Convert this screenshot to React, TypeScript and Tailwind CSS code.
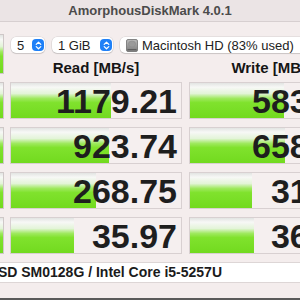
import type { ReactNode } from 'react'

const FONT = { fontFamily: '"Liberation Sans", Arial, sans-serif' }

const GREEN =
  'bg-[linear-gradient(to_bottom,#e2e4e2_0%,#f7f8f6_12%,#e3f4d8_30%,#9fe95f_44%,#80e22d_56%,#72da1f_100%)]'

interface Result {
  read: string
  write: string
  readBar: number
  writeBar: number
}

const RESULTS: Result[] = [
  { read: '1179.21', write: '583.41', readBar: 100, writeBar: 94 },
  { read: '923.74', write: '658.27', readBar: 98, writeBar: 95 },
  { read: '268.75', write: '31.95', readBar: 85, writeBar: 62 },
  { read: '35.97', write: '36.62', readBar: 63, writeBar: 64 },
]

function Stepper() {
  return (
    <span className="flex h-[12px] w-[12px] shrink-0 items-center justify-center rounded-[4px] bg-[#1f80f7]">
      <svg width="7" height="9" viewBox="0 0 7 9" fill="none">
        <path d="M1.2 3.4 3.5 1.2 5.8 3.4" stroke="white" strokeWidth="1.2" strokeLinecap="round" strokeLinejoin="round" />
        <path d="M1.2 5.6 3.5 7.8 5.8 5.6" stroke="white" strokeWidth="1.2" strokeLinecap="round" strokeLinejoin="round" />
      </svg>
    </span>
  )
}

function Select({ width, children }: { width: string; children: ReactNode }) {
  return (
    <div
      className={`flex h-[16px] shrink-0 items-center justify-between rounded-[5px] bg-white pr-[1px] pl-[6px] text-[13px] leading-none text-[#222] shadow-[0_0_0_0.5px_rgba(0,0,0,0.12),0_1px_1px_rgba(0,0,0,0.12)] ${width}`}
    >
      <span className="flex items-center gap-[4px]">{children}</span>
      <Stepper />
    </div>
  )
}

function DiskIcon() {
  return (
    <svg width="12" height="13" viewBox="0 0 12 13">
      <defs>
        <linearGradient id="hd" x1="0" y1="0" x2="0" y2="1">
          <stop offset="0" stopColor="#b9b9b9" />
          <stop offset="1" stopColor="#7d7d7d" />
        </linearGradient>
      </defs>
      <rect x="0.5" y="0.5" width="11" height="12" rx="1.5" fill="url(#hd)" stroke="#6f6f6f" strokeWidth="0.8" />
      <ellipse cx="6" cy="5" rx="3.6" ry="3" fill="#9a9a9a" stroke="#8a8a8a" strokeWidth="0.5" />
      <rect x="1.5" y="10" width="9" height="1.2" fill="#5e5e5e" />
    </svg>
  )
}

function Cell({ value, bar }: { value: string; bar: number }) {
  return (
    <div className="relative flex h-[37px] w-[172px] shrink-0 items-center justify-end overflow-hidden border border-[#d8d0d1] bg-[#f5efef] pr-[4px]">
      <div className={`absolute top-0 bottom-0 left-0 ${GREEN}`} style={{ width: `${bar}px` }} />
      <span className="relative text-[34px] leading-none font-bold text-[#1e1e1e]">{value}</span>
    </div>
  )
}

export default function App() {
  return (
    <div className="h-[300px] w-[300px] overflow-hidden bg-[#f4eded]" style={FONT}>
      <div className="flex h-[22px] items-center justify-center border-b border-[#d7cfd0] bg-[#ebe4e5] text-[13px] font-bold text-[#4b4b4b]">
        AmorphousDiskMark 4.0.1
      </div>

      <div className="-ml-[70px] flex w-[460px] flex-col">
        <div className="flex h-[60px] gap-[6px]">
          <div className={`mt-[12px] h-[40px] w-[74px] shrink-0 border border-[#cfc8c8] ${GREEN}`} />
          <div className="flex flex-col pt-[15px]">
            <div className="flex gap-[7px] pl-[1px]">
              <Select width="w-[34px]">5</Select>
              <Select width="w-[61px]">1 GiB</Select>
              <Select width="w-[200px]">
                <DiskIcon />
                Macintosh HD (83% used)
              </Select>
            </div>
            <div className="mt-[6px] flex h-[18px] gap-[7px] text-[15px] leading-[18px] font-bold text-[#151515]">
              <div className="w-[172px] text-center">Read [MB/s]</div>
              <div className="w-[172px] text-center">Write [MB/s]</div>
            </div>
          </div>
        </div>

        <div className="flex flex-col gap-[8px]">
          {RESULTS.map((r) => (
            <div key={r.read} className="flex gap-[6px]">
              <div className={`h-[37px] w-[74px] shrink-0 border border-[#cfc8c8] ${GREEN}`} />
              <div className="flex gap-[7px]">
                <Cell value={r.read} bar={r.readBar} />
                <Cell value={r.write} bar={r.writeBar} />
              </div>
            </div>
          ))}
        </div>

        <div className="mt-[8px] flex h-[21px] items-center border-y border-[#ddd6d6] bg-white pl-[8px] text-[14px] font-bold text-[#1b1b1b]">
          APPLE SSD SM0128G / Intel Core i5-5257U
        </div>
      </div>
      <div className="mt-[15px] h-[2px] bg-[#5a5a5a]" />
    </div>
  )
}
